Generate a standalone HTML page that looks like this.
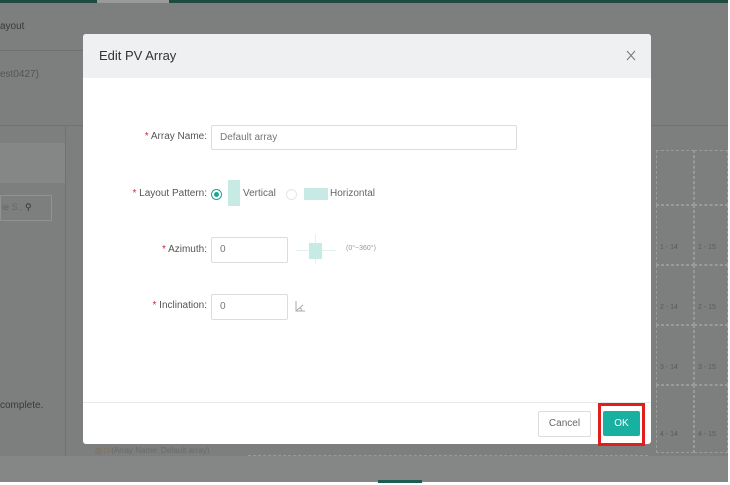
<!DOCTYPE html>
<html><head><style>
*{margin:0;padding:0;box-sizing:border-box}
body{width:730px;height:485px;background:#fff;font-family:"Liberation Sans",sans-serif;position:relative;overflow:hidden}
.bg{position:absolute;left:0;top:0;width:728px;height:482px;background:#7d7e7e}
.a{position:absolute}
.t{position:absolute;font-size:10px;color:#555;white-space:nowrap}
.cell{position:absolute;border:1px dashed #9a9a9a;font-size:7px;color:#5a5a5a;padding-top:3px;padding-left:3px}
.modal{position:absolute;left:83px;top:34px;width:568px;height:410px;background:#fff;border-radius:3px;overflow:hidden}
.hd{height:44px;background:#eef0f1;font-size:13px;color:#333;padding:14px 0 0 16px}
.lbl{position:absolute;font-size:10px;color:#555;text-align:right;width:130px}
.lbl b{color:#d8253b;font-weight:normal}
.in{position:absolute;border:1px solid #dcdcdc;border-radius:2px;font-size:10px;color:#777;padding:6px 0 0 8px}
</style></head><body>
<div class="bg"></div>
<div class="a" style="left:0;top:0;width:728px;height:3px;background:#1f4a40"></div>
<div class="a" style="left:97px;top:0;width:72px;height:3px;background:#9a9a9a"></div>
<div class="a" style="left:0;top:50px;width:83px;height:1px;background:#6f7070"></div>
<div class="t" style="left:0;top:21px;color:#3a3a3a">ayout</div>
<div class="t" style="left:0;top:69px">est0427)</div>
<div class="a" style="left:0;top:125px;width:83px;height:1px;background:#727373"></div>
<div class="a" style="left:0;top:143px;width:65px;height:40px;background:#858686"></div>
<div class="a" style="left:0;top:195px;width:52px;height:26px;border:1px solid #919292"></div>
<div class="t" style="left:2px;top:202px;font-size:9px;color:#666">ie S..  <span style="color:#333">&#9906;</span></div>
<div class="a" style="left:65px;top:126px;width:1px;height:330px;background:#707171"></div>
<div class="t" style="left:0;top:400px;color:#3a3a3a">complete.</div>
<div class="a" style="left:0;top:456px;width:728px;height:26px;background:#858686"></div>
<div class="t" style="left:640px;top:102px">sp</div>
<div class="a" style="left:651px;top:125px;width:77px;height:1px;background:#727373"></div>
<div class="cell" style="left:656px;top:150px;width:38px;height:55px"></div>
<div class="cell" style="left:694px;top:150px;width:34px;height:55px"></div>
<div class="cell" style="left:656px;top:205px;width:38px;height:60px"><br><br><br><br><br>1 - 14</div>
<div class="cell" style="left:694px;top:205px;width:34px;height:60px"><br><br><br><br><br>1 - 15</div>
<div class="cell" style="left:656px;top:265px;width:38px;height:60px"><br><br><br><br><br>2 - 14</div>
<div class="cell" style="left:694px;top:265px;width:34px;height:60px"><br><br><br><br><br>2 - 15</div>
<div class="cell" style="left:656px;top:325px;width:38px;height:60px"><br><br><br><br><br>3 - 14</div>
<div class="cell" style="left:694px;top:325px;width:34px;height:60px"><br><br><br><br><br>3 - 15</div>
<div class="cell" style="left:656px;top:385px;width:38px;height:68px"><br><br><br><br><br><br>4 - 14</div>
<div class="cell" style="left:694px;top:385px;width:34px;height:68px"><br><br><br><br><br><br>4 - 15</div>
<div class="t" style="left:95px;top:446px;font-size:8px;color:#6a6a6a"><span style="color:#8a6a40">&#9678; &#9633;</span> (Array Name: Default array)</div>
<div class="a" style="left:248px;top:444px;width:400px;height:12px;border-bottom:1px dashed #999"></div>
<div class="a" style="left:378px;top:480px;width:44px;height:3px;background:#1b5c50"></div>

<div class="modal">
 <div class="hd">Edit PV Array</div>
 <svg class="a" style="left:543px;top:16px" width="10" height="11"><path d="M1 1L9 10M9 1L1 10" stroke="#777" stroke-width="1" fill="none"/></svg>
 <div class="lbl" style="left:-6px;top:97px"><b>*</b> Array Name:</div>
 <div class="in" style="left:128px;top:91px;width:306px;height:25px">Default array</div>
 <div class="lbl" style="left:-6px;top:154px"><b>*</b> Layout Pattern:</div>
 <div class="a" style="left:128px;top:155px;width:11px;height:11px;border:1px solid #1aa594;border-radius:50%"></div>
 <div class="a" style="left:131px;top:158px;width:5px;height:5px;background:#1aa594;border-radius:50%"></div>
 <div class="a" style="left:145px;top:146px;width:12px;height:26px;background:#c7ebe4"></div>
 <div class="t" style="left:160px;top:154px;color:#666">Vertical</div>
 <div class="a" style="left:203px;top:155px;width:11px;height:11px;border:1px solid #e6e6e6;border-radius:50%"></div>
 <div class="a" style="left:221px;top:154px;width:24px;height:12px;background:#c7ebe4"></div>
 <div class="t" style="left:247px;top:154px;color:#666">Horizontal</div>
 <div class="lbl" style="left:-6px;top:210px"><b>*</b> Azimuth:</div>
 <div class="in" style="left:128px;top:203px;width:77px;height:26px">0</div>
 <div class="a" style="left:213px;top:216px;width:40px;height:1px;background:#e2f3ef"></div>
 <div class="a" style="left:232px;top:200px;width:1px;height:30px;background:#e2f3ef"></div>
 <div class="a" style="left:226px;top:209px;width:13px;height:16px;background:#c7ebe4"></div>
 <div class="t" style="left:263px;top:211px;font-size:7px;color:#999">(0°~360°)</div>
 <div class="lbl" style="left:-6px;top:266px"><b>*</b> Inclination:</div>
 <div class="in" style="left:128px;top:260px;width:77px;height:26px">0</div>
 <svg class="a" style="left:211px;top:266px" width="12" height="12"><path d="M2 1V11H11M2 11L9 5M6 8Q8 9 7 11" stroke="#aaa" fill="none" stroke-width="1"/></svg>
 <div class="a" style="left:0;top:368px;width:568px;height:1px;background:#e8e8e8"></div>
 <div class="a" style="left:455px;top:377px;width:53px;height:26px;border:1px solid #dcdcdc;border-radius:2px;font-size:10px;color:#666;text-align:center;line-height:24px">Cancel</div>
 <div class="a" style="left:520px;top:377px;width:37px;height:25px;background:#18b0a0;border-radius:2px;font-size:10px;color:#fff;text-align:center;line-height:25px">OK</div>
</div>
<div class="a" style="left:598px;top:403px;width:47px;height:43px;border:3px solid #e01e1e"></div>
</body></html>
